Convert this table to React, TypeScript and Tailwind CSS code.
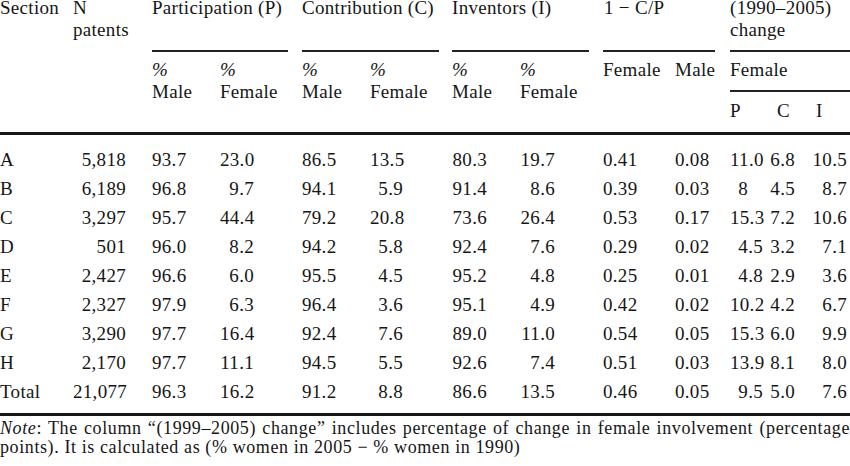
const cols = 'grid grid-cols-[73px_79px_68px_82px_68px_82px_68px_83px_72px_55px_36px_42px_42px]';

// right padding per data column, so numbers line up like the printed table
const pads = [
    'text-left',
    'text-right pr-[26px]',
    'text-right pr-[35px]',
    'text-right pr-[48px]',
    'text-right pr-[35px]',
    'text-right pr-[49px]',
    'text-right pr-[33px]',
    'text-right pr-[48px]',
    'text-right pr-[39px]',
    'text-right pr-[23px]',
    'text-right pr-[3px]',
    'text-right pr-[13px]',
    'text-right pr-[3px]',
];

const rows = [
    ['A', '5,818', '93.7', '23.0', '86.5', '13.5', '80.3', '19.7', '0.41', '0.08', '11.0', '6.8', '10.5'],
    ['B', '6,189', '96.8', '9.7', '94.1', '5.9', '91.4', '8.6', '0.39', '0.03', '8', '4.5', '8.7'],
    ['C', '3,297', '95.7', '44.4', '79.2', '20.8', '73.6', '26.4', '0.53', '0.17', '15.3', '7.2', '10.6'],
    ['D', '501', '96.0', '8.2', '94.2', '5.8', '92.4', '7.6', '0.29', '0.02', '4.5', '3.2', '7.1'],
    ['E', '2,427', '96.6', '6.0', '95.5', '4.5', '95.2', '4.8', '0.25', '0.01', '4.8', '2.9', '3.6'],
    ['F', '2,327', '97.9', '6.3', '96.4', '3.6', '95.1', '4.9', '0.42', '0.02', '10.2', '4.2', '6.7'],
    ['G', '3,290', '97.7', '16.4', '92.4', '7.6', '89.0', '11.0', '0.54', '0.05', '15.3', '6.0', '9.9'],
    ['H', '2,170', '97.7', '11.1', '94.5', '5.5', '92.6', '7.4', '0.51', '0.03', '13.9', '8.1', '8.0'],
    ['Total', '21,077', '96.3', '16.2', '91.2', '8.8', '86.6', '13.5', '0.46', '0.05', '9.5', '5.0', '7.6'],
];

function Pct({ label }: { label: string }) {
    return (
        <div className="row-span-2 pt-[7px]">
            <span className="italic">%</span>
            <br />
            {label}
        </div>
    );
}

export default function App() {
    return (
        <div className="h-[466px] w-[850px] overflow-hidden bg-white font-['Liberation_Serif',serif] text-[19px] text-[#161616]">
            {/* header */}
            <div className={`${cols} -mt-[3px] grid-rows-[55px_40px_40px] leading-[22px] tracking-[0.3px]`}>
                <div className="row-span-3">Section</div>
                <div className="row-span-3">
                    N
                    <br />
                    patents
                </div>
                <div className="col-span-2 mr-[14px] border-b-2 border-[#222]">Participation (P)</div>
                <div className="col-span-2 mr-[13px] border-b-2 border-[#222]">Contribution (C)</div>
                <div className="col-span-2 mr-[14px] border-b-2 border-[#222]">Inventors (I)</div>
                <div className="col-span-2 mr-[15px] border-b-2 border-[#222] pl-px">1 − C/P</div>
                <div className="col-span-3 border-b-2 border-[#222]">
                    (1990–2005)
                    <br />
                    change
                </div>

                <Pct label="Male" />
                <Pct label="Female" />
                <Pct label="Male" />
                <Pct label="Female" />
                <Pct label="Male" />
                <Pct label="Female" />
                <div className="row-span-2 pt-[7px]">Female</div>
                <div className="row-span-2 pt-[7px]">Male</div>
                <div className="col-span-3 border-b-2 border-[#222] pt-[7px]">Female</div>

                <div className="pt-[8px]">P</div>
                <div className="pt-[8px] pl-[11px]">C</div>
                <div className="pt-[8px] pl-[8px]">I</div>
            </div>
            <div className="h-[3px] bg-[#161616]" />

            {/* body */}
            <div className={`${cols} pt-[10px] leading-[29px] tracking-[0.3px]`}>
                {rows.map((row) =>
                    row.map((v, i) => (
                        <div key={row[0] + i} className={v === '8' ? 'text-right pr-[18px]' : pads[i]}>
                            {v}
                        </div>
                    )),
                )}
            </div>
            <div className="mt-[7px] h-[3px] bg-[#161616]" />

            <div className="mt-[3px] text-[18px] leading-[19px] tracking-[0.6px]">
                <p className="whitespace-nowrap [text-align-last:justify]">
                    <span className="italic">Note</span>: The column “(1999–2005) change” includes percentage of change in female
                    involvement (percentage
                </p>
                <p>points). It is calculated as (% women in 2005 − % women in 1990)</p>
            </div>
        </div>
    );
}
